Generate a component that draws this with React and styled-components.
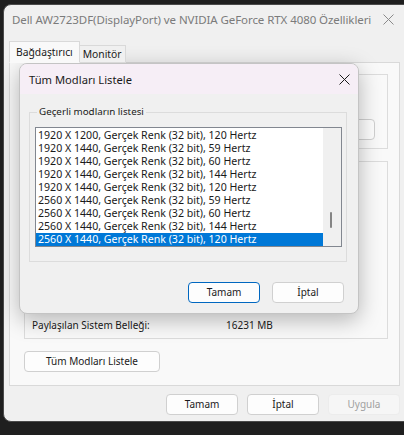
import React from 'react';
import styled, { createGlobalStyle, css } from 'styled-components';

const GlobalStyle = createGlobalStyle`
    html, body {
        margin: 0;
        padding: 0;
        background: #1f1f1f;
    }
    body {
        font-family: "Noto Sans", "Open Sans", sans-serif;
        font-size: 10px;
        color: #1a1a1a;
    }
`;

const Desktop = styled.div`
    width: 404px;
    height: 435px;
    overflow: hidden;
    padding: 4px 0 0 3px;
    box-sizing: border-box;
`;

const Window = styled.div`
    position: relative;
    width: 402px;
    height: 418px;
    background: #f0f0f0;
    border: 1px solid #4a4a4a;
    border-radius: 8px 0 0 8px;
    box-sizing: border-box;
    display: flex;
    flex-direction: column;
`;

const TitleBar = styled.div`
    height: 29px;
    display: flex;
    align-items: center;
    justify-content: space-between;
    padding: 0 10px 0 8px;
    color: #7b7b7b;
    font-size: 11.5px;
    letter-spacing: -0.08px;
    white-space: nowrap;
`;

const CloseGlyph = ({ color }) => (
    <svg width="11" height="11" viewBox="0 0 11 11">
        <path d="M0.5 0.5 L10.5 10.5 M10.5 0.5 L0.5 10.5" stroke={color} strokeWidth="1" fill="none" />
    </svg>
);

const Content = styled.div`
    flex: 1;
    display: flex;
    flex-direction: column;
    padding: 9px 4px 0 5px;
`;

const TabStrip = styled.div`
    display: flex;
    align-items: flex-end;
    height: 20px;
    position: relative;
    z-index: 1;
    margin-bottom: -1px;
`;

const Tab = styled.div`
    box-sizing: border-box;
    border: 1px solid #d9d9d9;
    display: flex;
    align-items: center;
    font-size: 10.3px;
    ${p => p.$active ? css`
        height: 22px;
        padding: 0 6px;
        background: #f9f9f9;
        border-bottom-color: #f9f9f9;
    ` : css`
        height: 18px;
        padding: 0 3px;
        background: #f0f0f0;
        border-left: none;
    `}
`;

const TabPanel = styled.div`
    height: 324px;
    box-sizing: border-box;
    background: #f9f9f9;
    border: 1px solid #d9d9d9;
    padding: 11px 11px 0 14px;
    display: flex;
    flex-direction: column;
`;

const Group = styled.div`
    box-sizing: border-box;
    border: 1px solid #dcdcdc;
    height: ${p => p.$h}px;
    margin-bottom: 12px;
    display: flex;
    flex-direction: column;
    padding: 8px 12px;
`;

const InfoGroup = styled(Group)`
    justify-content: flex-end;
    padding: 0 7px 3px 7px;
`;

const InfoRow = styled.div`
    display: flex;
    height: 20px;
    align-items: center;
`;

const InfoLabel = styled.span`
    width: 194px;
`;

const SmallRight = styled.div`
    display: flex;
    justify-content: flex-end;
    margin-top: auto;
`;

const Button = styled.button`
    box-sizing: border-box;
    height: 21px;
    width: ${p => p.$w || 72}px;
    font-family: inherit;
    font-size: 10px;
    color: ${p => p.disabled ? '#a0a0a0' : '#1a1a1a'};
    background: ${p => p.disabled ? '#f6f6f6' : '#fdfdfd'};
    border: 1px solid ${p => p.$primary ? '#0067c0' : p.disabled ? '#ececec' : '#d0d0d0'};
    border-radius: 4px;
    padding: 0;
    line-height: 19px;
`;

const Footer = styled.div`
    display: flex;
    justify-content: flex-end;
    gap: 9px;
    padding: 8px 0 0 0;
`;

const Dialog = styled.div`
    position: absolute;
    left: 15px;
    top: 58px;
    width: 340px;
    height: 251px;
    box-sizing: border-box;
    border: 1px solid #c4c4c4;
    border-radius: 8px;
    background: #f0f0f0;
    box-shadow: 0 6px 22px rgba(0, 0, 0, 0.28);
    overflow: hidden;
    display: flex;
    flex-direction: column;
`;

const DialogTitle = styled.div`
    height: 30px;
    background: #f6eef6;
    display: flex;
    align-items: center;
    justify-content: space-between;
    padding: 0 8px 0 9px;
    font-size: 11.2px;
    color: #1a1a1a;
`;

const DialogBody = styled.div`
    flex: 1;
    padding: 11px 11px 0 9px;
    display: flex;
    flex-direction: column;
`;

const ModeGroup = styled.fieldset`
    margin: 0;
    box-sizing: border-box;
    height: 157px;
    border: 1px solid #dcdcdc;
    padding: 8px 4px 0 5px;
    position: relative;
`;

const Legend = styled.legend`
    padding: 0 2px;
    margin-left: 2px;
    line-height: 14px;
    font-size: 9.8px;
`;

const ListBox = styled.div`
    box-sizing: border-box;
    height: 120px;
    background: #fff;
    border: 1px solid #828790;
    display: flex;
`;

const Rows = styled.div`
    flex: 1;
    padding-top: 1px;
    font-size: 10.6px;
`;

const Row = styled.div`
    height: 13px;
    line-height: 13px;
    padding-left: 2px;
    white-space: nowrap;
    ${p => p.$selected && css`
        background: #0078d7;
        color: #fff;
    `}
`;

const ScrollTrack = styled.div`
    width: 18px;
    background: #f0f0f0;
    position: relative;
`;

const ScrollThumb = styled.div`
    position: absolute;
    left: 7px;
    top: 84px;
    width: 2px;
    height: 16px;
    background: #858585;
    border-radius: 1px;
`;

const DialogButtons = styled.div`
    display: flex;
    justify-content: flex-end;
    gap: 12px;
    margin-top: 20px;
    padding-right: 3px;
`;

const modes = [
    ['1920 X 1200', 120],
    ['1920 X 1440', 59],
    ['1920 X 1440', 60],
    ['1920 X 1440', 144],
    ['1920 X 1440', 120],
    ['2560 X 1440', 59],
    ['2560 X 1440', 60],
    ['2560 X 1440', 144],
    ['2560 X 1440', 120],
];

const App = () => {
    const [selected, setSelected] = React.useState(modes.length - 1);

    return (
        <Desktop>
            <GlobalStyle />
            <Window>
                <TitleBar>
                    <span>Dell AW2723DF(DisplayPort) ve NVIDIA GeForce RTX 4080 Özellikleri</span>
                    <CloseGlyph color="#8a8a8a" />
                </TitleBar>
                <Content>
                    <TabStrip>
                        <Tab $active>Bağdaştırıcı</Tab>
                        <Tab>Monitör</Tab>
                    </TabStrip>
                    <TabPanel>
                        {/* adapter type box, mostly covered by the modes dialog */}
                        <Group $h={75}>
                            <SmallRight>
                                <Button $w={80} />
                            </SmallRight>
                        </Group>
                        <InfoGroup $h={178}>
                            <InfoRow>
                                <InfoLabel>Paylaşılan Sistem Belleği:</InfoLabel>
                                <span>16231 MB</span>
                            </InfoRow>
                        </InfoGroup>
                        <Button $w={136}>Tüm Modları Listele</Button>
                    </TabPanel>
                    <Footer>
                        <Button>Tamam</Button>
                        <Button>İptal</Button>
                        <Button disabled>Uygula</Button>
                    </Footer>
                </Content>

                <Dialog>
                    <DialogTitle>
                        <span>Tüm Modları Listele</span>
                        <CloseGlyph color="#1a1a1a" />
                    </DialogTitle>
                    <DialogBody>
                        <ModeGroup>
                            <Legend>Geçerli modların listesi</Legend>
                            <ListBox>
                                <Rows>
                                    {modes.map(([res, hz], i) => (
                                        <Row key={i} $selected={i === selected} onClick={() => setSelected(i)}>
                                            {res}, Gerçek Renk (32 bit), {hz} Hertz
                                        </Row>
                                    ))}
                                </Rows>
                                <ScrollTrack>
                                    <ScrollThumb />
                                </ScrollTrack>
                            </ListBox>
                        </ModeGroup>
                        <DialogButtons>
                            <Button $primary>Tamam</Button>
                            <Button>İptal</Button>
                        </DialogButtons>
                    </DialogBody>
                </Dialog>
            </Window>
        </Desktop>
    );
};

export default App;
